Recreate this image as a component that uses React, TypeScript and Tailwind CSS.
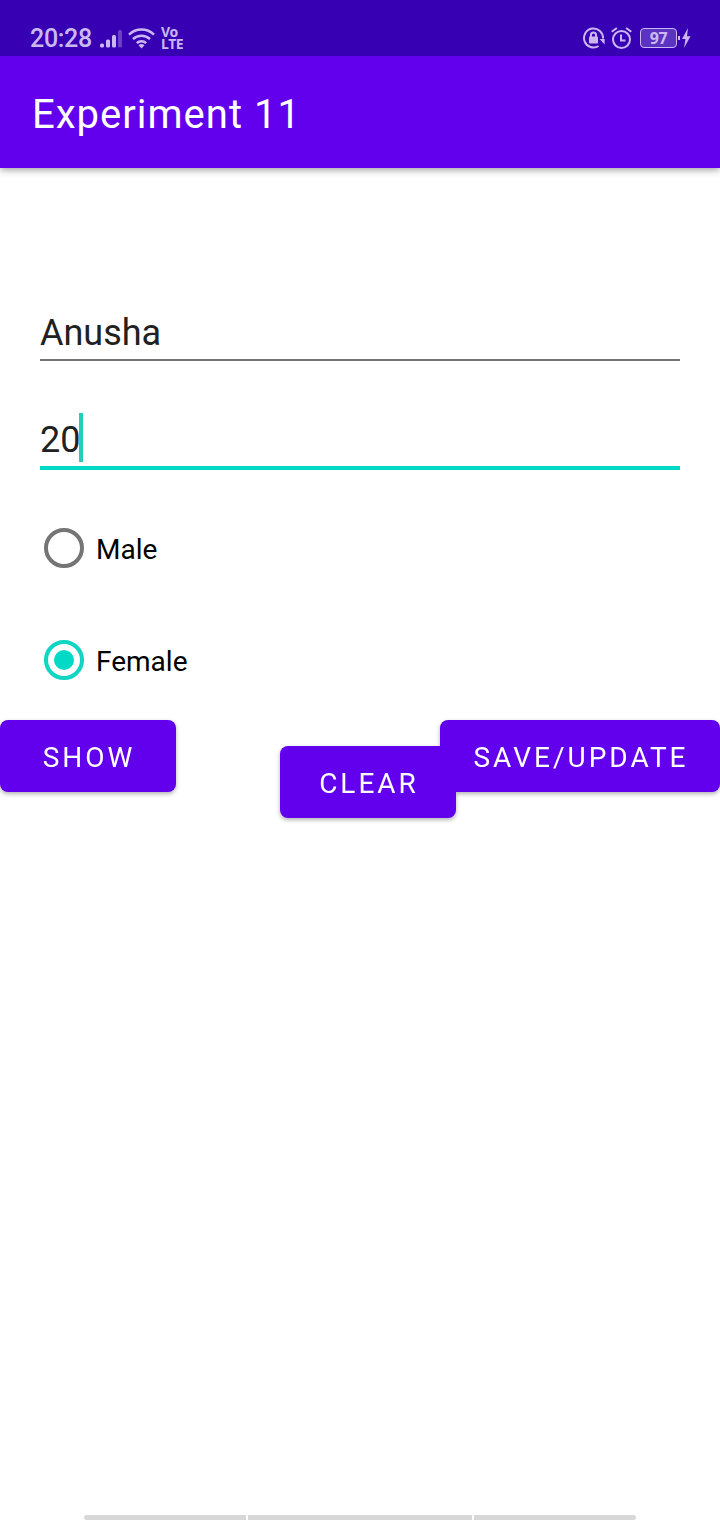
import type { ReactNode } from "react";

function StatusBar() {
  return (
    <div className="flex h-14 items-end justify-between bg-[#3700b3] pl-[30px] pr-[29px] text-[#cbb8f3]">
      <div className="flex h-9 items-center">
        <span className="w-[70px] pt-[2px] text-[25px] font-medium leading-[34px] tracking-[-0.3px]">20:28</span>
        <svg width="23" height="20" viewBox="0 0 23 20" className="shrink-0" fill="currentColor">
          <rect x="0" y="15.5" width="4" height="4" rx="1.5" />
          <rect x="6" y="11.5" width="4" height="8" rx="1.5" />
          <rect x="12" y="7" width="4" height="12.5" rx="1.5" />
          <rect x="18" y="2" width="4" height="17.5" rx="1.5" opacity=".35" />
        </svg>
        <svg width="28" height="22" viewBox="0 0 28 22" className="ml-[4px] shrink-0" fill="none" stroke="currentColor" strokeWidth="2.5">
          <path d="M2 7.6C9 .8 20 .8 27 7.6" />
          <path d="M6 12c4.8-4.4 12.2-4.4 17 0" />
          <path d="M9.8 16.2c2.6-2.5 6.8-2.5 9.4 0" />
          <path d="M14.5 21.4l-3-3.2c1.8-1.5 4.2-1.5 6 0z" fill="currentColor" stroke="none" />
        </svg>
        <span className="ml-[6px] flex w-6 flex-col font-['Noto_Sans',sans-serif] text-[14px] font-bold">
          <span className="h-3 leading-3 tracking-[-0.4px]">Vo</span>
          <span className="h-3 leading-3 tracking-[-0.4px]">LTE</span>
        </span>
      </div>
      <div className="flex h-9 items-center">
        <svg width="24" height="24" viewBox="0 0 24 24" className="shrink-0" fill="none" stroke="currentColor" strokeWidth="2">
          <path d="M16.6 20A9.5 9.5 0 1 1 21 12.5" />
          <path d="M17.6 13h5v5.4z" fill="currentColor" stroke="none" />
          <rect x="7" y="10.5" width="9" height="7" rx="1" fill="currentColor" stroke="none" />
          <path d="M8.9 11V9.2a2.6 2.6 0 0 1 5.2 0V11" />
        </svg>
        <svg width="24" height="24" viewBox="0 0 24 24" className="ml-[4px] shrink-0" fill="none" stroke="currentColor" strokeWidth="2">
          <circle cx="11.5" cy="13.5" r="8.5" />
          <path d="M11 8.5v6h4.5M1.7 5.8 6.9 2M21.3 5.8 16.1 2" />
        </svg>
        <span className="ml-[6px] flex h-5 w-[37px] items-center justify-center rounded-[4px] border border-[#cbb8f3] bg-[#5c33c0] font-['Noto_Sans',sans-serif] text-[16px] font-bold leading-5 tracking-[-0.3px]">97</span>
        <span className="ml-px h-1 w-[2px] bg-[#cbb8f3]" />
        <svg width="9" height="20" viewBox="0 0 9 20" className="ml-[2px] shrink-0" fill="currentColor">
          <path d="M6 0 0 11h3.5L2 20 8.5 8.3H5z" />
        </svg>
      </div>
    </div>
  );
}

function Radio({ label, checked }: { label: string; checked?: boolean }) {
  return (
    <label className="flex h-16 items-center">
      <span className={checked ? "flex size-10 items-center justify-center rounded-full border-4 border-[#10d5c3]" : "size-10 rounded-full border-4 border-[#757575]"}>
        {checked && <span className="size-5 rounded-full bg-[#03dac5]" />}
      </span>
      <span className="ml-3 pt-[3px] text-[28px] leading-8 text-black">{label}</span>
    </label>
  );
}

function Button({ children, className }: { children: ReactNode; className: string }) {
  return (
    <button className={`h-[72px] shrink-0 rounded-lg bg-[#6200ee] pl-[2px] pt-[4px] text-center text-[28px] leading-8 tracking-[3px] text-white ${className}`}>
      {children}
    </button>
  );
}

export default function App() {
  return (
    <div className="flex h-[1520px] w-[720px] flex-col overflow-hidden bg-white font-['Roboto',sans-serif]">
      <header className="shrink-0 shadow-[0_2px_7px_rgba(0,0,0,0.38)]">
        <StatusBar />
        <div className="flex h-28 items-center bg-[#6200ee] pl-8 pt-[6px]">
          <h1 className="text-[40px] leading-[48px] tracking-[1px] text-white">Experiment 11</h1>
        </div>
      </header>
      <main className="flex flex-1 flex-col">
        <div className="mx-10 mt-[136px] flex h-[57px] items-center border-b-2 border-[#757575] pt-[2px] text-[36px] leading-[42px] text-[#212121]">
          Anusha
        </div>
        <div className="mx-10 mt-[49px] flex h-[60px] items-center border-b-4 border-[#03dac5] text-[36px] leading-[42px] text-[#212121]">
          <span className="w-[39px] pt-[4px]">20</span>
          <span className="mb-[2px] h-[49px] w-1 bg-[#24cdbc]" />
        </div>
        <div className="ml-11 mt-[46px] flex flex-col gap-12">
          <Radio label="Male" />
          <Radio label="Female" checked />
        </div>
        <div className="mt-7 flex items-start drop-shadow-[0_2px_2px_rgba(0,0,0,0.3)]">
          <Button className="w-44">SHOW</Button>
          <Button className="ml-[104px] mt-[26px] w-44">CLEAR</Button>
          <Button className="-ml-4 w-[280px]">SAVE/UPDATE</Button>
        </div>
      </main>
      <div className="mx-[84px] flex h-[5px] shrink-0 gap-[2px] overflow-hidden rounded-full">
        <div className="w-[162px] bg-[#d8d8d8]" />
        <div className="w-56 bg-[#d8d8d8]" />
        <div className="w-[162px] bg-[#d8d8d8]" />
      </div>
    </div>
  );
}
